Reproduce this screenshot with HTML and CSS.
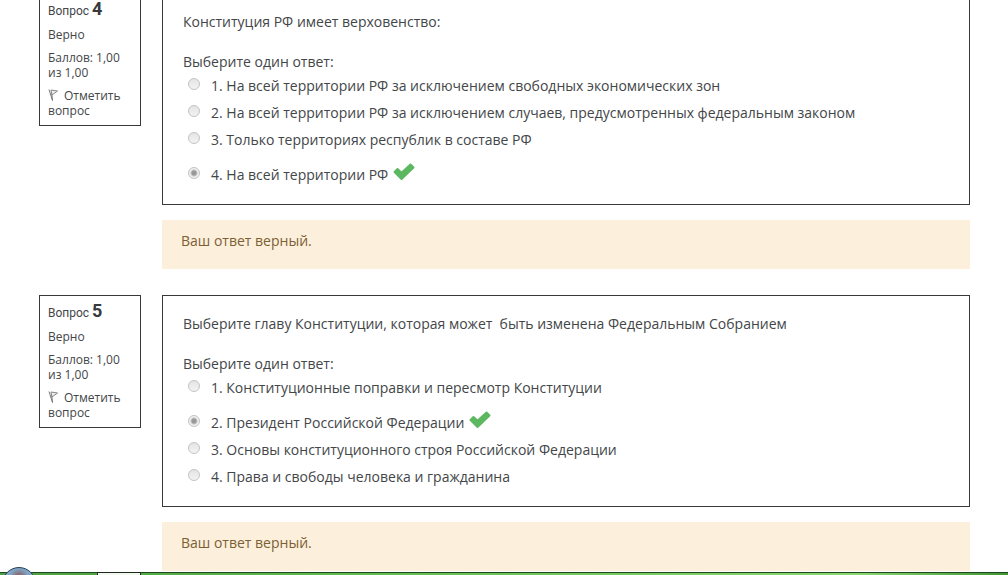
FILE: index.html
```
<!DOCTYPE html>
<html lang="ru">
<head>
    <meta charset="UTF-8">
    <meta name="viewport" content="width=device-width, initial-scale=1.0">
    <title>Тест: просмотр попытки</title>
    <link rel="stylesheet" href="styles.css">
</head>
<body>
    <main class="quiz">
        <section class="question">
            <div class="info">
                <h3 class="info-title">Вопрос <span class="info-number">4</span></h3>
                <p>Верно</p>
                <p>Баллов: 1,00 из 1,00</p>
                <a href="#" class="flag-link"><svg class="flag" viewBox="0 0 12 14"><path d="M1 1.5L4.5 12.5M3.5 3.5L4.5 12.5" fill="none" stroke="#777" stroke-width="1"/><path d="M3 2L9.5 3L4 7Z" fill="#eee" stroke="#888" stroke-width="1"/></svg>Отметить вопрос</a>
            </div>
            <div class="content">
                <div class="formulation">
                    <p class="qtext">Конституция РФ имеет верховенство:</p>
                    <fieldset class="answers">
                        <legend>Выберите один ответ:</legend>
                        <div class="answer">
                            <input type="radio" name="q4" id="q4a1" disabled>
                            <label for="q4a1">1. На всей территории РФ за исключением свободных экономических зон</label>
                        </div>
                        <div class="answer">
                            <input type="radio" name="q4" id="q4a2" disabled>
                            <label for="q4a2">2. На всей территории РФ за исключением случаев, предусмотренных федеральным законом</label>
                        </div>
                        <div class="answer">
                            <input type="radio" name="q4" id="q4a3" disabled>
                            <label for="q4a3">3. Только территориях республик в составе РФ</label>
                        </div>
                        <div class="answer correct">
                            <input type="radio" name="q4" id="q4a4" checked disabled>
                            <label for="q4a4">4. На всей территории РФ</label>
                            <svg class="check" viewBox="0 0 22 18"><path d="M1.5 9L4.5 6L8.5 9.8L17.5 1.5L20.5 4.5L8.5 16Z" fill="#5cb860" stroke="#5cb860" stroke-width="2" stroke-linejoin="round"/></svg>
                        </div>
                    </fieldset>
                </div>
                <div class="feedback">Ваш ответ верный.</div>
            </div>
        </section>

        <section class="question">
            <div class="info">
                <h3 class="info-title">Вопрос <span class="info-number">5</span></h3>
                <p>Верно</p>
                <p>Баллов: 1,00 из 1,00</p>
                <a href="#" class="flag-link"><svg class="flag" viewBox="0 0 12 14"><path d="M1 1.5L4.5 12.5M3.5 3.5L4.5 12.5" fill="none" stroke="#777" stroke-width="1"/><path d="M3 2L9.5 3L4 7Z" fill="#eee" stroke="#888" stroke-width="1"/></svg>Отметить вопрос</a>
            </div>
            <div class="content">
                <div class="formulation">
                    <p class="qtext">Выберите главу Конституции, которая может&nbsp; быть изменена Федеральным Собранием</p>
                    <fieldset class="answers">
                        <legend>Выберите один ответ:</legend>
                        <div class="answer">
                            <input type="radio" name="q5" id="q5a1" disabled>
                            <label for="q5a1">1. Конституционные поправки и пересмотр Конституции</label>
                        </div>
                        <div class="answer correct">
                            <input type="radio" name="q5" id="q5a2" checked disabled>
                            <label for="q5a2">2. Президент Российской Федерации</label>
                            <svg class="check" viewBox="0 0 22 18"><path d="M1.5 9L4.5 6L8.5 9.8L17.5 1.5L20.5 4.5L8.5 16Z" fill="#5cb860" stroke="#5cb860" stroke-width="2" stroke-linejoin="round"/></svg>
                        </div>
                        <div class="answer">
                            <input type="radio" name="q5" id="q5a3" disabled>
                            <label for="q5a3">3. Основы конституционного строя Российской Федерации</label>
                        </div>
                        <div class="answer">
                            <input type="radio" name="q5" id="q5a4" disabled>
                            <label for="q5a4">4. Права и свободы человека и гражданина</label>
                        </div>
                    </fieldset>
                </div>
                <div class="feedback">Ваш ответ верный.</div>
            </div>
        </section>
    </main>

    <div class="taskbar">
        <div class="start-orb"></div>
        <div class="task"></div>
    </div>
</body>
</html>
```
FILE: styles.css
```
* {
    box-sizing: border-box;
}

body {
    margin: 0;
    height: 100vh;
    overflow: hidden;
    background: #fff;
    color: #434648;
    font-family: "Open Sans", sans-serif;
    font-size: 14px;
    line-height: 20px;
}

p {
    margin: 0;
}

/* the list is scrolled slightly past the first card's top edge */
.quiz {
    margin-top: -7px;
    padding: 0 38px 0 39px;
}

.question {
    display: grid;
    grid-template-columns: 102px 1fr;
    column-gap: 21px;
    align-items: start;
}

.question + .question {
    margin-top: 26px;
}

/* Left column */
.info {
    display: flex;
    flex-direction: column;
    gap: 8px;
    padding: 7px 8px;
    border: 1px solid #373a3c;
    font-size: 12px;
    line-height: 15px;
}

.info-title {
    margin: 0;
    font-family: Roboto, sans-serif;
    font-size: 12px;
    font-weight: 400;
    line-height: 15px;
}

.info-number {
    color: #373a3c;
    font-size: 18px;
    font-weight: 700;
}

.flag-link {
    color: inherit;
    text-decoration: none;
}

.flag {
    width: 12px;
    height: 14px;
    margin-right: 4px;
    vertical-align: -2px;
}

/* Question body */
.formulation {
    padding: 18px 20px 16px;
    border: 1px solid #373a3c;
}

.qtext {
    margin-bottom: 20px;
}

.answers {
    margin: 0;
    padding: 0;
    border: 0;
}

.answers legend {
    padding: 0;
}

.answer {
    display: flex;
    align-items: center;
    min-height: 27px;
    padding-left: 5px;
}

.answer.correct {
    min-height: 35px;
    padding-top: 8px;
}

.answer input {
    appearance: none;
    flex: none;
    width: 12px;
    height: 12px;
    margin: 0 11px 4px 0;
    border: 1px solid #c3c3c3;
    border-radius: 50%;
    background: linear-gradient(#e4e4e4, #f3f3f3);
}

.answer input:checked {
    background: radial-gradient(circle, #999 0 2px, #f0f0f0 4px);
}

.check {
    width: 22px;
    height: 18px;
    margin: 0 0 5px 5px;
}

.feedback {
    min-height: 49px;
    margin-top: 15px;
    padding: 11px 19px;
    background: #fcefdc;
    color: #7d5f35;
}

/* Desktop bar over the bottom edge */
.taskbar {
    position: fixed;
    left: 0;
    right: 0;
    bottom: 0;
    height: 3px;
    border-top: 1px solid #1c4a1c;
    background: linear-gradient(90deg, #4d9e45, #5cb84d 30%, #8bd873 85%, #3f9436);
}

.start-orb {
    position: absolute;
    left: 2px;
    top: -6px;
    width: 34px;
    height: 34px;
    border: 1px solid #263f57;
    border-radius: 50%;
    background: radial-gradient(circle at 50% 30%, #8a6a72 0 3px, #7fa3c4 9px, #a9c4d8);
}

.task {
    position: absolute;
    left: 97px;
    top: -1px;
    width: 44px;
    height: 4px;
    border: 1px solid #1b2a1b;
    border-bottom: 0;
    background: #f2f7f0;
}
```
